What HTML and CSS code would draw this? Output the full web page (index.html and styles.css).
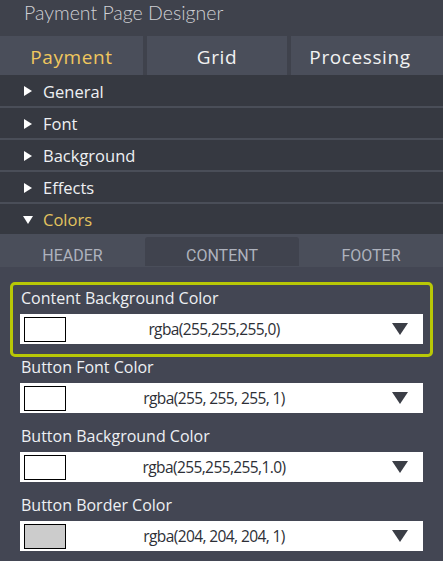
FILE: index.html
```html
<!DOCTYPE html>
<html>
<head>
<meta charset="utf-8">
<link rel="stylesheet" href="styles.css">
</head>
<body>
<div class="panel">
  <div class="title">Payment Page Designer</div>
  <div class="tabs">
    <div class="tab active">Payment</div>
    <div class="tab">Grid</div>
    <div class="tab last">Processing</div>
  </div>
  <div class="acc">
    <div class="acc-row"><span class="tri right"></span>General</div>
    <div class="acc-row"><span class="tri right"></span>Font</div>
    <div class="acc-row"><span class="tri right"></span>Background</div>
    <div class="acc-row"><span class="tri right"></span>Effects</div>
    <div class="acc-row open"><span class="tri down"></span>Colors</div>
  </div>
  <div class="subtabs">
    <div class="subtab">HEADER</div>
    <div class="subtab active">CONTENT</div>
    <div class="subtab">FOOTER</div>
  </div>
  <div class="content">
    <div class="group hl">
      <div class="label">Content Background Color</div>
      <div class="select"><span class="swatch"></span><span class="value">rgba(255,255,255,0)</span><span class="arrow"></span></div>
    </div>
    <div class="group">
      <div class="label">Button Font Color</div>
      <div class="select"><span class="swatch"></span><span class="value">rgba(255, 255, 255, 1)</span><span class="arrow"></span></div>
    </div>
    <div class="group">
      <div class="label">Button Background Color</div>
      <div class="select"><span class="swatch"></span><span class="value">rgba(255,255,255,1.0)</span><span class="arrow"></span></div>
    </div>
    <div class="group">
      <div class="label">Button Border Color</div>
      <div class="select"><span class="swatch grey"></span><span class="value">rgba(204, 204, 204, 1)</span><span class="arrow"></span></div>
    </div>
  </div>
</div>
</body>
</html>
```
FILE: styles.css
```css
html, body {
  margin: 0;
  padding: 0;
  background: #434653;
}
body {
  font-family: "Open Sans", "Noto Sans", sans-serif;
  width: 443px;
  height: 561px;
  overflow: hidden;
}
.panel {
  background: #434653;
  min-height: 561px;
}
.title {
  background: #3f424c;
  height: 36px;
  box-sizing: border-box;
  padding: 1px 0 0 24px;
  color: #cfd0d4;
  font-family: "Lato", sans-serif;
  font-weight: 300;
  font-size: 19.5px;
  line-height: 24px;
}
.tabs {
  display: grid;
  grid-template-columns: 143px 140px 1fr;
  column-gap: 4px;
  background: #3f424c;
  height: 39px;
}
.tab {
  background: #4a4e5a;
  color: #f2f2f2;
  font-size: 19px;
  letter-spacing: 0.6px;
  line-height: 39px;
  padding-top: 2px;
  box-sizing: border-box;
  height: 39px;
  text-align: center;
}
.tab.active { color: #f0c75e; }
.tab.last { padding-right: 14px; }
.acc-row {
  display: flex;
  align-items: center;
  height: 30px;
  background: #363941;
  color: #eef0f3;
  font-size: 16.5px;
  padding-left: 24px;
  padding-top: 1px;
  box-sizing: border-box;
}
.acc-row:first-child { height: 31px; }
.acc-row + .acc-row { border-top: 2px solid #4a4e58; height: 32px; }
.acc-row.open { color: #e3c35f; }
.tri {
  width: 0;
  height: 0;
  margin-right: 11px;
}
.tri.right {
  border-top: 5px solid transparent;
  border-bottom: 5px solid transparent;
  border-left: 8px solid #ffffff;
}
.tri.down {
  border-left: 5px solid transparent;
  border-right: 5px solid transparent;
  border-top: 8px solid #ffffff;
  margin-left: -1px;
  margin-right: 10px;
}
.subtabs {
  display: grid;
  grid-template-columns: 145px 154px 1fr;
  height: 33px;
  box-sizing: border-box;
  padding-top: 3px;
  background: #4a4e5a;
}
.subtab {
  font-family: "Roboto", sans-serif;
  font-size: 16px;
  color: #aeb2bd;
  text-align: center;
  line-height: 37px;
  height: 29px;
}
.subtab.active {
  background: #40434e;
  border-radius: 3px 3px 0 0;
}
.content {
  padding: 15px 20px 0 20px;
}
.group {
  margin-bottom: 13px;
}
.group.hl {
  margin: 0 -10px;
  padding: 3px 7px 10px 7px;
  border: 3px solid #b8c806;
  border-radius: 5px;
}
.label {
  color: #eef0f3;
  font-size: 16px;
  line-height: 20px;
  height: 20px;
  padding-left: 1px;
  margin-bottom: 6px;
}
.select {
  display: flex;
  align-items: center;
  height: 30px;
  background: #ffffff;
  padding: 0 15px 0 4px;
}
.swatch {
  width: 40px;
  height: 23px;
  border: 1px solid #000;
  background: #ffffff;
  flex: none;
}
.swatch.grey { background: #cccccc; }
.value {
  flex: 1;
  text-align: center;
  font-size: 15.5px;
  color: #2d2f36;
  letter-spacing: -0.6px;
  padding-right: 30px;
}
.arrow {
  width: 0;
  height: 0;
  border-left: 8px solid transparent;
  border-right: 8px solid transparent;
  border-top: 12px solid #3b3e46;
  flex: none;
}
```
